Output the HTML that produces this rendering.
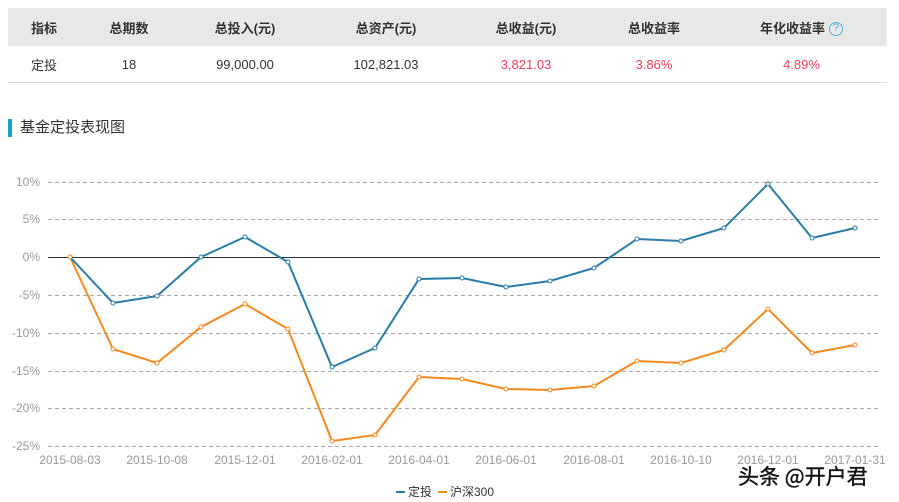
<!DOCTYPE html>
<html><head><meta charset="utf-8"><style>
body{margin:0;width:899px;height:502px;background:#fff;font-family:"Liberation Sans","Noto Sans CJK SC",sans-serif;overflow:hidden;position:relative}
table{position:absolute;left:8px;top:8px;width:879px;border-collapse:collapse;font-size:13px;table-layout:fixed}
th{background:#e8e8e8;height:38px;font-weight:bold;color:#333;padding:0}
td{height:36px;border-bottom:1px solid #ddd;color:#333;text-align:center;padding:0}
.r{color:#f03c5a}
.q{display:inline-block;width:14px;height:14px;border:1.5px solid #4ab8d8;border-radius:50%;color:#4ab8d8;font-size:11px;font-weight:normal;vertical-align:middle;margin-left:4px;box-sizing:border-box;line-height:11px}
.title{position:absolute;left:8px;top:119px;border-left:4px solid #1aa5c8;padding-left:8px;font-size:15px;color:#333;line-height:18px}
</style></head><body>
<table><tr><th style="width:72px">指标</th><th style="width:98px">总期数</th><th style="width:134px">总投入(元)</th><th style="width:148px">总资产(元)</th><th style="width:132px">总收益(元)</th><th style="width:124px">总收益率</th><th>年化收益率<span class="q">?</span></th></tr>
<tr><td>定投</td><td>18</td><td>99,000.00</td><td>102,821.03</td><td class="r">3,821.03</td><td class="r">3.86%</td><td class="r">4.89%</td></tr></table>
<div class="title">基金定投表现图</div>
<svg width="899" height="502" style="position:absolute;left:0;top:0" font-family="Liberation Sans, sans-serif">
<g stroke="#aaa" stroke-dasharray="4,3" stroke-width="1">
<line x1="48" x2="880" y1="182.5" y2="182.5"/><line x1="48" x2="880" y1="219.5" y2="219.5"/>
<line x1="48" x2="880" y1="295.5" y2="295.5"/><line x1="48" x2="880" y1="333.5" y2="333.5"/>
<line x1="48" x2="880" y1="371.5" y2="371.5"/><line x1="48" x2="880" y1="408.5" y2="408.5"/>
<line x1="48" x2="880" y1="446.5" y2="446.5"/></g>
<line x1="48" x2="880" y1="257.5" y2="257.5" stroke="#333"/>
<g fill="#999" font-size="12" text-anchor="end">
<text x="40" y="186">10%</text><text x="40" y="223">5%</text><text x="40" y="261">0%</text><text x="40" y="299">-5%</text><text x="40" y="337">-10%</text><text x="40" y="375">-15%</text><text x="40" y="412">-20%</text><text x="40" y="450">-25%</text></g>
<g fill="#999" font-size="12" text-anchor="middle">
<text x="70" y="464">2015-08-03</text><text x="157" y="464">2015-10-08</text><text x="245" y="464">2015-12-01</text><text x="332" y="464">2016-02-01</text><text x="419" y="464">2016-04-01</text><text x="506" y="464">2016-06-01</text><text x="594" y="464">2016-08-01</text><text x="681" y="464">2016-10-10</text><text x="768" y="464">2016-12-01</text><text x="855" y="464">2017-01-31</text></g>
<polyline fill="none" stroke="#f5891f" stroke-width="2" points="70,257 113,349 157,363 201,327 245,304 288,329 332,441 375,435 419,377 462,379 506,389 550,390 594,386 637,361 681,363 724,350 768,309 812,353 855,345"/>
<polyline fill="none" stroke="#2a7ca8" stroke-width="2" points="70,257 113,303 157,296 201,257 245,237 288,262 332,367 375,348 419,279 462,278 506,287 550,281 594,268 637,239 681,241 724,228 768,184 812,238 855,228"/>
<g fill="#fff" stroke="#f5891f" stroke-width="1"><circle cx="113" cy="349" r="2"/><circle cx="157" cy="363" r="2"/><circle cx="201" cy="327" r="2"/><circle cx="245" cy="304" r="2"/><circle cx="288" cy="329" r="2"/><circle cx="332" cy="441" r="2"/><circle cx="375" cy="435" r="2"/><circle cx="419" cy="377" r="2"/><circle cx="462" cy="379" r="2"/><circle cx="506" cy="389" r="2"/><circle cx="550" cy="390" r="2"/><circle cx="594" cy="386" r="2"/><circle cx="637" cy="361" r="2"/><circle cx="681" cy="363" r="2"/><circle cx="724" cy="350" r="2"/><circle cx="768" cy="309" r="2"/><circle cx="812" cy="353" r="2"/><circle cx="855" cy="345" r="2"/></g>
<g fill="#fff" stroke="#2a7ca8" stroke-width="1"><circle cx="113" cy="303" r="2"/><circle cx="157" cy="296" r="2"/><circle cx="201" cy="257" r="2"/><circle cx="245" cy="237" r="2"/><circle cx="288" cy="262" r="2"/><circle cx="332" cy="367" r="2"/><circle cx="375" cy="348" r="2"/><circle cx="419" cy="279" r="2"/><circle cx="462" cy="278" r="2"/><circle cx="506" cy="287" r="2"/><circle cx="550" cy="281" r="2"/><circle cx="594" cy="268" r="2"/><circle cx="637" cy="239" r="2"/><circle cx="681" cy="241" r="2"/><circle cx="724" cy="228" r="2"/><circle cx="768" cy="184" r="2"/><circle cx="812" cy="238" r="2"/><circle cx="855" cy="228" r="2"/></g>
<circle cx="70" cy="257" r="2" fill="#fff" stroke="#f5891f"/>
<line x1="396" x2="405" y1="492" y2="492" stroke="#2a7ca8" stroke-width="2"/>
<text x="408" y="496" font-size="12" fill="#333" font-family="Noto Sans CJK SC, sans-serif">定投</text>
<line x1="438" x2="447" y1="492" y2="492" stroke="#f5891f" stroke-width="2"/>
<text x="450" y="496" font-size="12" fill="#333" font-family="Liberation Sans, Noto Sans CJK SC, sans-serif">沪深300</text>
<text x="738" y="484" font-size="21" fill="#111" font-family="Noto Sans CJK SC, sans-serif" stroke="#111" stroke-width="0.4">头条 @开户君</text>
</svg>
</body></html>
